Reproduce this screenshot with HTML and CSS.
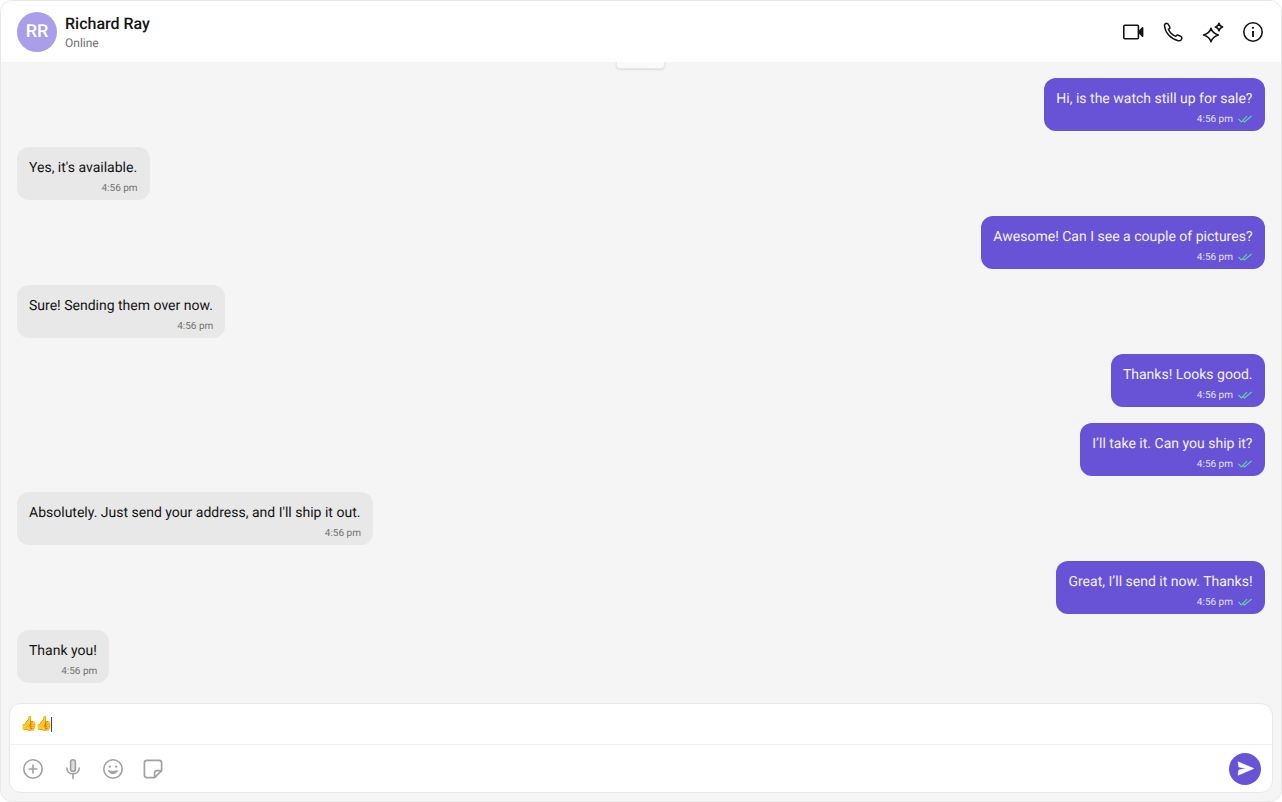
FILE: index.html
```html
<!DOCTYPE html>
<html lang="en">
<head>
<meta charset="utf-8">
<title>Chat</title>
<link rel="stylesheet" href="styles.css">
</head>
<body>
<svg class="defs" width="0" height="0" aria-hidden="true">
  <symbol id="ticks" viewBox="0 0 14 8">
    <path d="M0.4 4L3.4 7L9 1.2M5 5.6L6.4 7L13.6 1" fill="none" stroke="#5fd3a8" stroke-width="1.1"/>
  </symbol>
</svg>
<main class="chat">
  <header class="header">
    <div class="avatar">RR</div>
    <div class="who">
      <div class="name">Richard Ray</div>
      <div class="status">Online</div>
    </div>
    <div class="actions">
      <svg class="icon" viewBox="0 0 24 24" fill="none" stroke="#141414" stroke-width="1.6" stroke-linejoin="round"><rect x="2.8" y="5.2" width="14.6" height="13.6" rx="1"/><path d="M18 11.5L21.6 7.8V16.2L18 12.5Z" fill="#141414"/></svg>
      <svg class="icon" viewBox="0 0 24 24" fill="none" stroke="#141414" stroke-width="1.5" stroke-linejoin="round"><path d="M3.5 5.8C3.4 4.2 4.6 3.2 6 3.4C6.8 3.5 7.2 4 7.5 4.6L8.8 7C9.1 7.7 8.9 8.3 8.3 8.7L7.4 9.2C8.8 12.5 11.4 15 14.8 16.4L15.4 15.6C15.9 15 16.6 14.9 17.3 15.2L19.8 16.4C20.8 16.9 21 18 20.6 19.2C20.1 20.5 18.6 21 17.2 20.7C9.8 19 4.2 13 3.5 5.8Z"/></svg>
      <svg class="icon" viewBox="0 0 24 24" fill="none" stroke="#141414" stroke-width="1.6" stroke-linejoin="round"><path d="M10 8.2C10.8 11.2 12.6 13.4 17.4 15C12.6 16.6 10.8 18.8 10 21.8C9.2 18.8 7.4 16.6 2.6 15C7.4 13.4 9.2 11.2 10 8.2Z"/><path d="M18 3.2C18.3 5.2 19.2 6.2 21.6 7C19.2 7.8 18.3 8.8 18 10.8C17.7 8.8 16.8 7.8 14.4 7C16.8 6.2 17.7 5.2 18 3.2Z"/></svg>
      <svg class="icon" viewBox="0 0 24 24" fill="none" stroke="#141414" stroke-width="1.6"><circle cx="12" cy="12" r="9.2"/><path d="M12 11V17" stroke-width="1.9"/><circle cx="12" cy="7.8" r="1.1" fill="#141414" stroke="none"/></svg>
    </div>
  </header>

  <section class="list">
    <div class="date-chip"><span class="date-text">Today</span></div>

    <div class="bubble out"><p class="text">Hi, is the watch still up for sale?</p><div class="meta"><span>4:56 pm</span><svg class="tick"><use href="#ticks"/></svg></div></div>
    <div class="bubble in"><p class="text">Yes, it's available.</p><div class="meta"><span>4:56 pm</span></div></div>
    <div class="bubble out"><p class="text">Awesome! Can I see a couple of pictures?</p><div class="meta"><span>4:56 pm</span><svg class="tick"><use href="#ticks"/></svg></div></div>
    <div class="bubble in"><p class="text">Sure! Sending them over now.</p><div class="meta"><span>4:56 pm</span></div></div>
    <div class="bubble out"><p class="text">Thanks! Looks good.</p><div class="meta"><span>4:56 pm</span><svg class="tick"><use href="#ticks"/></svg></div></div>
    <div class="bubble out"><p class="text">I’ll take it. Can you ship it?</p><div class="meta"><span>4:56 pm</span><svg class="tick"><use href="#ticks"/></svg></div></div>
    <div class="bubble in"><p class="text">Absolutely. Just send your address, and I'll ship it out.</p><div class="meta"><span>4:56 pm</span></div></div>
    <div class="bubble out"><p class="text">Great, I’ll send it now. Thanks!</p><div class="meta"><span>4:56 pm</span><svg class="tick"><use href="#ticks"/></svg></div></div>
    <div class="bubble in"><p class="text">Thank you!</p><div class="meta"><span>4:56 pm</span></div></div>
  </section>

  <footer class="composer">
    <div class="input"><span class="emoji">👍👍</span><span class="caret"></span></div>
    <div class="tools">
      <svg class="tool" viewBox="0 0 24 24" fill="none" stroke="#a1a1a1" stroke-width="1.6"><circle cx="12" cy="12" r="9.2"/><path d="M12 7.5V16.5M7.5 12H16.5"/></svg>
      <svg class="tool" viewBox="0 0 24 24" fill="none" stroke="#a1a1a1" stroke-width="1.6" stroke-linecap="round"><rect x="9.6" y="2.8" width="4.8" height="11.6" rx="2.4" fill="#dcdcdc"/><path d="M5.8 11C5.8 14.4 8.5 16.8 12 16.8C15.5 16.8 18.2 14.4 18.2 11M12 17V21.4"/></svg>
      <svg class="tool" viewBox="0 0 24 24" fill="none" stroke="#a1a1a1" stroke-width="1.6"><circle cx="12" cy="12" r="9.2"/><circle cx="8.8" cy="9.6" r="1.2" fill="#a1a1a1" stroke="none"/><circle cx="15.2" cy="9.6" r="1.2" fill="#a1a1a1" stroke="none"/><path d="M7.4 13.6C8.4 15.8 10 16.6 12 16.6C14 16.6 15.6 15.8 16.6 13.6C14 14.6 10 14.6 7.4 13.6Z" fill="#a1a1a1" stroke-width="1"/></svg>
      <svg class="tool" viewBox="0 0 24 24" fill="none" stroke="#a1a1a1" stroke-width="1.7" stroke-linejoin="round"><path d="M6 3.4H18C19.5 3.4 20.6 4.5 20.6 6V13.6L13.6 20.6H6C4.5 20.6 3.4 19.5 3.4 18V6C3.4 4.5 4.5 3.4 6 3.4Z"/><path d="M20.4 13.6H16C14.6 13.6 13.6 14.6 13.6 16V20.4"/></svg>
      <button class="send" type="button" aria-label="Send"><svg viewBox="0 0 24 24" width="19" height="19"><path d="M2.6 3.6L22.4 12L2.6 20.4L3.6 14L13 12L3.6 10Z" fill="#fff" stroke="#fff" stroke-width=".8" stroke-linejoin="round"/></svg></button>
    </div>
  </footer>
</main>
</body>
</html>
```
FILE: styles.css
```css
* { box-sizing: border-box; }
html, body { margin: 0; height: 100%; }
body { font-family: Roboto, "Noto Sans", sans-serif; background: #fff; overflow: hidden; text-rendering: geometricPrecision; }
.defs { position: absolute; }
.chat {
  width: 1282px; height: 802px;
  display: flex; flex-direction: column;
  background: #f5f5f5;
  border: 1px solid #e8e8e8;
  border-radius: 12px;
  overflow: hidden;
}
.header {
  height: 61px; flex: none;
  display: flex; align-items: center;
  padding: 0 16px;
  background: #fff;
}
.avatar {
  width: 40px; height: 40px; border-radius: 50%;
  background: #aa9ee8; color: #fff;
  font-size: 18px; font-weight: 500; line-height: 40px; text-align: center;
}
.who { margin-left: 8px; padding-top: 1px; }
.name { font-size: 16px; font-weight: 500; line-height: 20px; color: #141414; }
.status { font-size: 12px; line-height: 16px; margin-top: 1px; color: #727272; }
.actions { margin-left: auto; display: flex; gap: 16px; }
.icon { width: 24px; height: 24px; display: block; }

.list {
  flex: 1; min-height: 0;
  position: relative;
  display: flex; flex-direction: column; gap: 16px;
  padding: 16px 16px 0;
  overflow: hidden;
}
.date-chip {
  position: absolute; left: 615px; top: -18px;
  width: 49px; height: 25px;
  background: #fafafa;
  border: 1px solid #e8e8e8;
  border-radius: 4px;
  box-shadow: 0 1px 2px rgba(0,0,0,.1);
  font-size: 10px; line-height: 12px; text-align: center; color: #727272;
  padding-top: 9px;
}
.date-text { display: block; height: 12px; clip-path: inset(10px 0 0 0); }
.bubble { border-radius: 12px; padding: 9px 12.5px 5px 12px; flex: none; height: 53px; }
.bubble.out { align-self: flex-end; background: #6852d6; color: #fff; }
.bubble.in { align-self: flex-start; background: #e8e8e8; color: #141414; }
.text { margin: 0; font-size: 14px; line-height: 24px; white-space: nowrap; letter-spacing: .004px; }
.out .text { color: #f3f1fc; }
.meta {
  display: flex; justify-content: flex-end; align-items: center; gap: 5px;
  height: 13px; margin-top: 2px;
  font-size: 10px; line-height: 13px;
}
.in .meta { color: #727272; margin-right: -.5px; }
.out .meta { color: #e5e1f7; margin-right: .5px; }
.tick { width: 14px; height: 8px; display: block; margin-top: -2px; }

.composer {
  flex: none; height: 90px;
  margin: 0 8px 8px;
  background: #fff;
  border: 1px solid #e8e8e8;
  border-radius: 12px;
  display: flex; flex-direction: column;
}
.input {
  height: 41px; flex: none;
  display: flex; align-items: center;
  padding: 0 11px 0 10px;
  border-bottom: 1px solid #f0f0f0;
}
.emoji { font-size: 14px; letter-spacing: -2px; line-height: 20px; font-family: "Noto Color Emoji", Roboto, sans-serif; }
.caret { width: 1px; height: 15px; background: #444; }
.tools {
  flex: 1; display: flex; align-items: center; gap: 16px;
  padding: 0 11px;
}
.tool { width: 24px; height: 24px; display: block; }
.send {
  margin-left: auto; width: 32px; height: 32px; border: 0; border-radius: 50%;
  background: #6852d6; padding: 0;
  display: flex; align-items: center; justify-content: center;
}
```
